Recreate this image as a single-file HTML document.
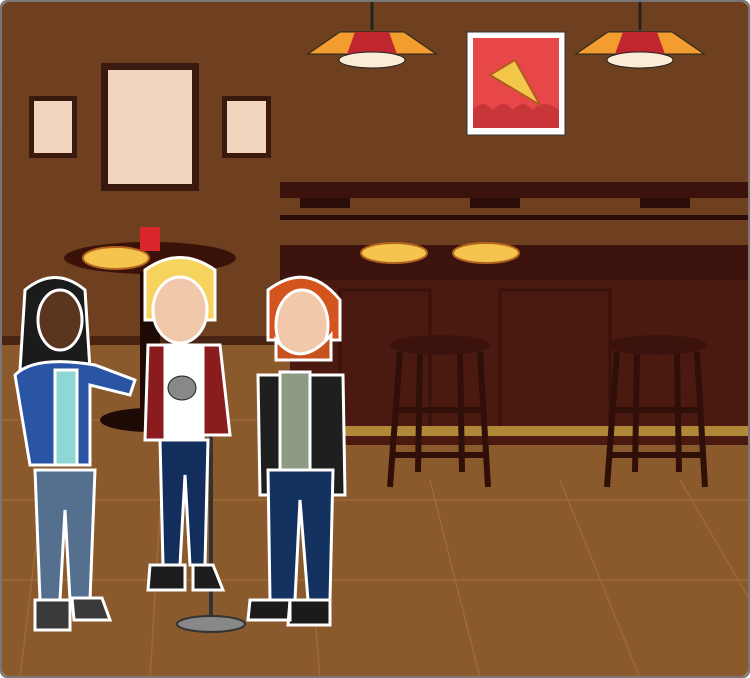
<!DOCTYPE html>
<html><head><meta charset="utf-8"><style>
html,body{margin:0;padding:0;width:750px;height:678px;overflow:hidden;background:#fff}
svg{display:block}
</style></head><body>
<svg width="750" height="678" viewBox="0 0 750 678" xmlns="http://www.w3.org/2000/svg">
<defs><clipPath id="c"><rect x="2" y="2" width="746" height="674" rx="6"/></clipPath></defs>
<g clip-path="url(#c)">
<!-- wall -->
<rect x="0" y="0" width="750" height="350" fill="#6e401f"/>
<rect x="0" y="336" width="280" height="12" fill="#4a2412"/>
<!-- floor -->
<rect x="0" y="345" width="750" height="340" fill="#8a5a2c"/>
<g stroke="#9c6a38" stroke-width="1.5">
<line x1="0" y1="420" x2="750" y2="420"/><line x1="0" y1="500" x2="750" y2="500"/><line x1="0" y1="580" x2="750" y2="580"/>
<line x1="60" y1="345" x2="20" y2="678"/><line x1="170" y1="345" x2="150" y2="678"/><line x1="300" y1="440" x2="320" y2="678"/><line x1="430" y1="480" x2="480" y2="678"/><line x1="560" y1="480" x2="640" y2="678"/><line x1="680" y1="480" x2="750" y2="600"/>
</g>
<!-- frames -->
<rect x="29" y="96" width="48" height="62" fill="#3a1a0e"/><rect x="34" y="101" width="38" height="52" fill="#f1d5be"/>
<rect x="101" y="63" width="98" height="128" fill="#3a1a0e"/><rect x="108" y="70" width="84" height="114" fill="#f1d5be"/>
<rect x="222" y="96" width="49" height="62" fill="#3a1a0e"/><rect x="227" y="101" width="39" height="52" fill="#f1d5be"/>
<!-- pizza poster -->
<rect x="467" y="32" width="98" height="103" fill="#fff" stroke="#333"/>
<rect x="473" y="38" width="86" height="90" fill="#e8474a"/>
<path d="M473 110 q10 -12 20 0 q10 -12 20 0 q10 -12 20 0 q10 -12 26 0 v18 h-86z" fill="#c9363a"/>
<path d="M490 75 l25 -15 l25 45 z" fill="#f3c74a" stroke="#b35a20" stroke-width="2"/>
<!-- lamps -->
<line x1="372" y1="0" x2="372" y2="30" stroke="#222" stroke-width="3"/>
<path d="M340 32 h64 l32 22 h-128z" fill="#f29d2e" stroke="#222"/><path d="M355 32 h34 l8 22 h-50z" fill="#c0262e"/>
<ellipse cx="372" cy="60" rx="33" ry="8" fill="#fbecd6" stroke="#222"/>
<line x1="640" y1="0" x2="640" y2="30" stroke="#222" stroke-width="3"/>
<path d="M608 32 h64 l32 22 h-128z" fill="#f29d2e" stroke="#222"/><path d="M623 32 h34 l8 22 h-50z" fill="#c0262e"/>
<ellipse cx="640" cy="60" rx="33" ry="8" fill="#fbecd6" stroke="#222"/>
<!-- shelf -->
<rect x="280" y="182" width="470" height="16" fill="#3b120c"/>
<rect x="300" y="198" width="50" height="10" fill="#2a0c08"/><rect x="470" y="198" width="50" height="10" fill="#2a0c08"/><rect x="640" y="198" width="50" height="10" fill="#2a0c08"/>
<rect x="280" y="215" width="470" height="5" fill="#2a0c08"/>
<!-- bar -->
<rect x="280" y="245" width="470" height="35" fill="#3d140d"/>
<rect x="290" y="280" width="460" height="165" fill="#4a1a10"/>
<rect x="340" y="290" width="90" height="140" fill="none" stroke="#3a120a" stroke-width="3"/>
<rect x="500" y="290" width="110" height="140" fill="none" stroke="#3a120a" stroke-width="3"/>
<rect x="290" y="426" width="460" height="10" fill="#b08838"/>
<!-- pizzas -->
<ellipse cx="394" cy="253" rx="33" ry="10" fill="#f4c44e" stroke="#b5651d" stroke-width="2"/>
<ellipse cx="486" cy="253" rx="33" ry="10" fill="#f4c44e" stroke="#b5651d" stroke-width="2"/>
<!-- table -->
<ellipse cx="150" cy="258" rx="86" ry="16" fill="#3a120a"/>
<rect x="140" y="272" width="20" height="140" fill="#1e0905"/>
<ellipse cx="150" cy="420" rx="50" ry="12" fill="#1e0905"/>
<ellipse cx="116" cy="258" rx="33" ry="11" fill="#f4c44e" stroke="#b5651d" stroke-width="2"/>
<rect x="140" y="227" width="20" height="24" fill="#d8262a"/>
<!-- stools -->
<g fill="none" stroke="#2f0f08" stroke-width="6">
<path d="M400 352 l-10 135 M480 352 l8 135 M420 352 l-2 120 M460 352 l2 120 M393 410 h92 M391 455 h96"/>
<path d="M617 352 l-10 135 M697 352 l8 135 M637 352 l-2 120 M677 352 l2 120 M610 410 h92 M608 455 h96"/>
</g>
<ellipse cx="440" cy="345" rx="50" ry="10" fill="#3b120c"/>
<ellipse cx="657" cy="345" rx="50" ry="10" fill="#3b120c"/>
<!-- mic stand -->
<line x1="211" y1="410" x2="211" y2="620" stroke="#333" stroke-width="4"/>
<ellipse cx="211" cy="624" rx="34" ry="8" fill="#888" stroke="#333" stroke-width="2"/>
<!-- woman left -->
<g stroke="#fff" stroke-width="3">
<path d="M25 290 q30 -25 60 0 l5 80 h-70z" fill="#1b1b1b"/>
<ellipse cx="60" cy="320" rx="22" ry="30" fill="#5a3520"/>
<path d="M15 375 q20 -20 80 -10 l40 15 l-5 15 l-40 -10 l0 80 h-60z" fill="#2a55a5"/>
<rect x="55" y="370" width="22" height="95" fill="#8fd7d6"/>
<path d="M35 470 h60 l-5 130 h-20 l-5 -90 l-5 90 h-20z" fill="#54708e"/>
<path d="M35 600 h35 v30 h-35z M72 598 h30 l8 22 h-36z" fill="#3a3a3a"/>
</g>
<!-- blonde woman -->
<g stroke="#fff" stroke-width="3">
<path d="M145 270 q35 -25 70 0 v50 h-70z" fill="#f6d35c"/>
<ellipse cx="180" cy="310" rx="27" ry="33" fill="#f2c8aa"/>
<path d="M148 345 h72 l10 90 h-30 v-10 h-25 v15 h-30z" fill="#8a1c1e"/>
<rect x="165" y="345" width="38" height="95" fill="#fff"/>
<path d="M160 440 h48 l-3 125 h-15 l-5 -90 l-5 90 h-17z" fill="#132e5c"/>
<path d="M150 565 h35 v25 h-37z M193 565 h20 l10 25 h-30z" fill="#1d1d1d"/>
</g>
<ellipse cx="182" cy="388" rx="14" ry="12" fill="#888" stroke="#222"/>
<!-- red hair man -->
<g stroke="#fff" stroke-width="3">
<path d="M268 290 q40 -30 72 10 v40 h-72z" fill="#d4541e"/>
<ellipse cx="302" cy="325" rx="26" ry="35" fill="#f2c8aa"/>
<path d="M276 340 q25 30 55 -5 v25 h-55z" fill="#c8521e"/>
<path d="M258 375 h85 l2 120 h-85z" fill="#1f1f1f"/>
<rect x="280" y="372" width="30" height="100" fill="#8f9a85"/>
<path d="M268 470 h65 l-3 130 h-22 l-8 -100 l-5 100 h-25z" fill="#14325f"/>
<path d="M250 600 h40 v20 h-42z M290 600 h40 v25 h-42z" fill="#1b1b1b"/>
</g>
</g>
<rect x="1" y="1" width="748" height="676" rx="6" fill="none" stroke="#777" stroke-width="2"/>
</svg>
</body></html>
